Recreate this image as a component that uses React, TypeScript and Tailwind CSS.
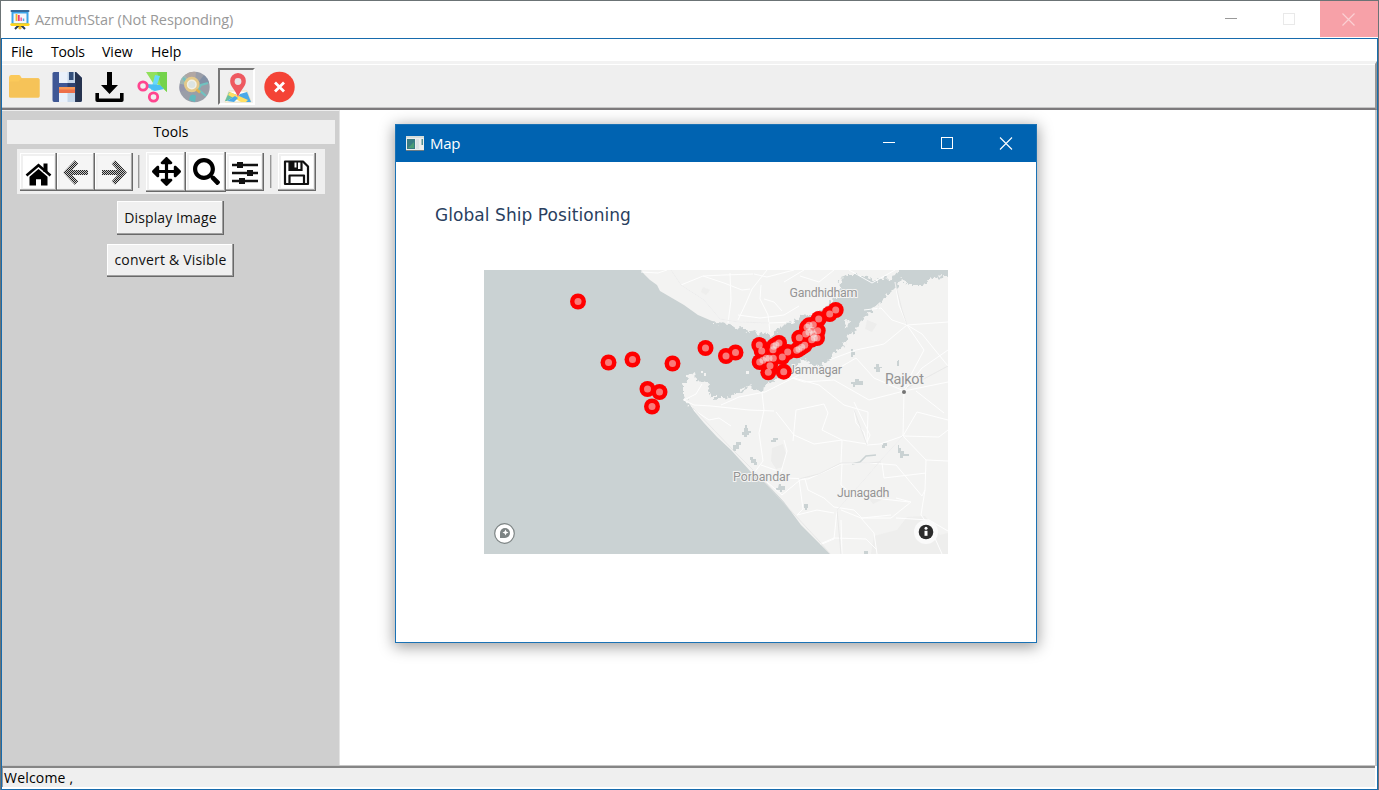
import React from "react";
import { FaArrowsAlt, FaSearch } from "react-icons/fa";

const ships: [number, number][] = [
  [94, 31.5], [124.5, 92.5], [148.5, 89.5], [188.5, 93.5], [163.5, 119], [175.5, 122], [168, 136.5],
  [221.5, 78], [242, 86], [251.5, 82.5], [275.3, 75], [277.7, 81], [275.7, 92], [279, 90.3],
  [282.3, 88.3], [285, 88.3], [289.3, 88.3], [286, 95.7], [284.3, 102.3], [299.7, 101.7],
  [298.3, 87], [303.7, 82], [289, 79.7], [289.7, 76.3], [292, 75], [295, 73], [312.7, 80.3],
  [315, 79], [317.7, 77.3], [320.7, 75.3], [315.3, 67.7], [323, 57.3], [325, 55.3], [329.3, 54.7],
  [334.7, 49], [345.7, 44], [351.7, 40], [321.7, 64], [325, 62.3], [327.7, 60.3], [333.7, 60.7],
  [329.3, 64], [327.7, 69.7], [330.3, 68], [333, 68],
];

const roads = [
  "M187 0L197 15L220 30L236 49L254 52L285 53L309 52",
  "M157 2L174 3L183 0M197 15L219 6L240 13L258 20L266 19",
  "M219 6L240 5L269 4M246 3L247 30L244 53M254 50L262 33L268 19L283 0M277 15L276 29L284 45L286 62",
  "M254 45L276 48L300 45L315 36M280 29L290 32L298 41M270 4L283 7L310 0",
  "M300 12L320 0M316 6L335 12L350 0M365 0L388 13L411 0M380 40L397 38L408 50L423 55L464 52",
  "M411 12L415 35L423 55L440 80L420 118M423 55L438 64L464 96M423 55L400 74L372 80L345 90",
  "M310 108L335 115L360 135L384 142M308 108L320 112L350 110L385 130L420 121L464 112",
  "M420 121L438 98L464 80M420 121L419 166L418 165M420 121L390 108L372 88L355 98",
  "M200 130L212 124L218 114M200 130L210 135L227 136L265 140L290 141M210 140L225 150L235 148L247 156",
  "M237 135L255 127L281 122L315 105M278 123L280 140L275 163L279 191L270 203M292 142L310 165L330 174L358 170L383 174",
  "M309 171L312 140L340 134L344 143L338 160L358 170L357 193",
  "M370 140L372 153L380 162L383 175L396 174L419 166L455 167L464 160",
  "M419 166L433 142L464 150M419 166L397 190L380 210L353 240L350 269L338 274",
  "M419 166L442 190L441 220L438 226L412 195L385 193L357 194L340 202L324 209L280 207",
  "M300 170L303 181L297 202L277 195M283 212L298 225L316 210L321 209L324 220L340 228L350 237L370 240L378 248L407 245",
  "M315 209L319 239L313 245L333 240L350 243M358 194L357 215L371 226L390 228L425 232",
  "M442 190L464 191M442 203L400 208L398 193M412 228L427 232L407 248L378 248",
  "M336 274L350 268L382 269L393 280M357 240L377 248L390 263L393 284M412 248L445 250L464 261",
  "M441 220L437 245L446 257L458 284M357 250L358 284M370 132L386 165L382 175M384 142L383 174M432 121L460 143",
];

function NavButton({ size, children }: { size: string; children: React.ReactNode }) {
  return (
    <div className={`${size} flex shrink-0 items-center justify-center bg-[#f0f0f0] shadow-[inset_-1px_-1px_#696969,inset_-2px_-2px_#a8a8a8,inset_1px_1px_#ffffff]`}>
      {children}
    </div>
  );
}

function TextButton({ size, children }: { size: string; children: React.ReactNode }) {
  return (
    <button className={`${size} flex items-center justify-center whitespace-nowrap bg-[#f0f0f0] pb-[2px] text-[14px] text-[#111] shadow-[inset_-1px_-1px_#696969,inset_-2px_-2px_#a0a0a0,inset_1px_1px_#ffffff]`}>
      {children}
    </button>
  );
}

function Dithered({ d }: { d: string }) {
  return (
    <svg width="32" height="32" viewBox="0 0 32 32">
      <defs>
        <pattern id="dither" width="2" height="2" patternUnits="userSpaceOnUse">
          <path d="M0 0h1v1H0zM1 1h1v1H1z" fill="#222" shapeRendering="crispEdges" />
        </pattern>
      </defs>
      <path d="M0 0h32v32H0z" fill="#f5f5f5" />
      <path d={d} fill="none" stroke="#c8c8c8" strokeWidth="4.800" />
      <path d={d} fill="none" stroke="url(#dither)" strokeWidth="4.800" />
    </svg>
  );
}

function AppIcon() {
  return (
    <svg width="20" height="20" viewBox="0 0 20 20" className="shrink-0">
      <path d="M10 14v5M9 15l-4 4M11 15l4 4" stroke="#2d3c50" strokeWidth="2" />
      <rect x="1.5" y="1" width="17" height="14" rx="1" fill="#3da5e8" />
      <rect x="0.5" y="0" width="19" height="2" rx="1" fill="#356a9b" />
      <rect x="0.3" y="13.2" width="19.4" height="2.800" rx="1.4" fill="#ffd51c" />
      <rect x="3.500" y="3.500" width="13" height="9.500" fill="#f4f7fb" />
      <path d="M6.5 4v7" stroke="#f7b42c" strokeWidth="1.8" />
      <path d="M8.8 5v6" stroke="#f13a6e" strokeWidth="1.8" />
      <path d="M11.2 7.5V11" stroke="#e6609f" strokeWidth="1.5" />
      <path d="M13.5 8.5V11" stroke="#57a8de" strokeWidth="1.5" />
      <circle cx="10" cy="17.800" r="1.7" fill="#f2bd19" />
    </svg>
  );
}

function FolderIcon() {
  return (
    <svg width="31" height="32" viewBox="0 0 31 32">
      <path d="M0 6.5Q0 4 2 4h8q1.2 0 2 2l.8 1.2H29q1.5 0 1.5 1.5V25q0 1.5-1.5 1.5H1.5Q0 26.500 0 25z" fill="#fbc95a" />
      <path d="M0 12q0-1.500 1.500-1.500h8l3-3.300H29q1.500 0 1.500 1.500V25q0 1.500-1.500 1.500H1.500Q0 26.500 0 25z" fill="#f6c358" />
    </svg>
  );
}

function FloppyIcon() {
  return (
    <svg width="31" height="32" viewBox="0 0 31 32">
      <path d="M2 1h22l6 6v22q0 2-2 2H2q-1.500 0-1.500-2V2.500Q.5 1 2 1z" fill="#3f5795" />
      <path d="M23 1h1l6 6v22q0 2-2 2h-5z" fill="#26334f" />
      <path d="M15.500 12h8v19h-8z" fill="#2f4370" />
      <path d="M7 1h9v11H7z" fill="#eaf1fb" />
      <path d="M15.500 1H23v11h-7.500z" fill="#c6d7ea" />
      <path d="M17 1h4.500v8H17z" fill="#34507c" />
      <path d="M7 16h16v5H7z" fill="#f99854" />
      <path d="M7 18.500h16V22H7z" fill="#ed704b" />
      <path d="M7 22h9v9H7z" fill="#eaf1fb" />
      <path d="M15.500 22H23v9h-7.500z" fill="#c6d7ea" />
    </svg>
  );
}

function DownloadIcon() {
  return (
    <svg width="29" height="32" viewBox="0 0 29 32">
      <path d="M12 1h5v13h6L14.500 23 6 14h6z" fill="#000" />
      <path d="M2.200 22v7.300h24.600V22" fill="none" stroke="#000" strokeWidth="3.600" strokeLinejoin="round" />
    </svg>
  );
}

function ScissorsIcon() {
  return (
    <svg width="31" height="32" viewBox="0 0 31 32">
      <path d="M9 1h21v20L22 14l-6-2z" fill="#91e05b" />
      <path d="M20 1h10v20l-6-6z" fill="#74d34c" />
      <path d="M18 4l5 1-5 15-4-1z" fill="#66d9fa" />
      <path d="M9 13l14 1 4 4-9 2-8-4z" fill="#49bff3" />
      <circle cx="6" cy="15" r="4.200" fill="none" stroke="#ff458f" strokeWidth="2.800" />
      <circle cx="16.500" cy="26" r="4.200" fill="none" stroke="#ff458f" strokeWidth="2.800" />
    </svg>
  );
}

function DiscIcon() {
  return (
    <svg width="31" height="32" viewBox="0 0 31 32">
      <circle cx="15.500" cy="16" r="15.200" fill="#9a9ea8" />
      <path d="M15.500 16L6 4Q11 0 17 1z" fill="#b1a7a3" />
      <path d="M15.500 16L25 4q4 3 5 8z" fill="#8290a5" />
      <path d="M15.500 16L1 13Q1 7 6 4z" fill="#a3b6b2" />
      <path d="M15.500 16L1 21Q0 17 1 13z" fill="#9697ac" />
      <path d="M4 7q4 3 2 7M29 12l-7 2-3 4 8 7" fill="none" stroke="#70c2c0" strokeWidth="2.300" />
      <path d="M11 25q3-3 6 0l-1 6-6-2z" fill="#60b9bd" />
      <circle cx="12.800" cy="13.500" r="6.400" fill="#f3f1e6" stroke="#e4c98a" strokeWidth="2.800" />
      <circle cx="12.800" cy="13.500" r="3.500" fill="#dbe4e2" />
      <path d="M17.500 18.500l3.500 3" stroke="#e2b252" strokeWidth="2.600" />
    </svg>
  );
}

function MapPinIcon() {
  return (
    <svg width="28" height="30" viewBox="0 0 28 30">
      <path d="M5 18h18l4 11H1z" fill="#fff" stroke="#ece2bd" />
      <path d="M5 19l8 3-10 6H1z" fill="#68bfa1" />
      <path d="M16 21l7-2 4 10h-9l-5-4z" fill="#4ba9e8" />
      <path d="M6 19L24 27l-2 2h-5L4 22z" fill="#ffe064" />
      <path d="M3 28l8-5 3 2-4 4z" fill="#4ba9e8" />
      <path d="M14 0a7.800 7.800 0 0 1 7.800 8.500c0 5-4.800 8-7.800 15.500-3-7.500-7.800-10.500-7.800-15.500a7.800 7.800 0 0 1 7.800-8.500z" fill="#ee5960" />
      <circle cx="14" cy="8.500" r="3.400" fill="#e8e3e6" />
    </svg>
  );
}

function ShipMap() {
  return (
    <svg width="464" height="284" viewBox="0 0 464 284" className="block">
      <defs>
        <filter id="rough" x="-5%" y="-5%" width="110%" height="110%" colorInterpolationFilters="sRGB">
          <feTurbulence type="fractalNoise" baseFrequency="0.25" numOctaves="2" seed="4" />
          <feDisplacementMap in="SourceGraphic" scale="9" xChannelSelector="R" yChannelSelector="G" />
        </filter>
      </defs>
      <rect width="464" height="284" fill="#cad2d3" />
      <g fill="#f3f3f2">
        <path d="M157 0L160 4 166 10 173 15 176 21 200 35 214 45 228 51 244 53 300 48V0z" />
        <path d="M204 131L210 141 220 153 233 167 247 180 267 202 283 214 300 232 317 255 346 284H464V118L272 128z" />
        <g filter="url(#rough)">
          <path d="M235 45L230 53 246 54 252 58 258 57 266 62 273 61 278 66 282 61 287 68 292 60 297 58 302 53 310 51 318 46 326 47 335 41 342 37 350 30 354 25 356 13 361 5 378 5 393 10 402 8 408 9 413 2V-10H235z" />
          <path d="M475 6L448 8 440 15 425 15 417 9 413 16 405 24 397 32 388 40 379 48 372 60 364 66 359 77 352 80 344 91 334 97 326 93 319 89 312 97 305 105 292 110 282 115 278 122 272 121 267 116 260 119 252 124 242 128 229 128 225 123 226 114 220 112 212 111 211 101 204 107 199 115 199 125 204 136 245 160H475z" />
          <path d="M361 50l4 2-2 5-3-1zM217 112l5 2-3 3z" />
        </g>
        <path d="M316 94h12v2h-12zM217 101h2v2h-2zM220 103h2v3h-2zM206 104h2v2h-2zM262 101h3v3h-3z" />
      </g>
      <g fill="#ececeb" opacity="0.8">
        <path d="M288 178l11-4 3 10-3 13-7 2-5-8zM382 225l14-4 6 7-13 6zM390 266l23-6 10-13 18-1 15 19 8-2v21h-77z" />
        <path d="M383 50l10 4-5 8-7-3zM219 17l7 3-4 5-5-3z" />
      </g>
      <g fill="#cad2d3">
        <path d="M261 155h2v3h1v3h3v2h-2v2h-2v2h-3v-2h-2v-3h2v-4h1zM252 172h5v3h-2v4h-3v2h-3v-6h3zM266 187h3v2h3v3h1v3h-3v-2h-3v-3h-1zM289 168h5v2h-2v2h-5v-2h2zM295 214h2v2h4v4h-3v2h-2v-2h-4v-2h2zM320 234h4v4h-1v2h-2v-2h-1zM399 173h4v3h-2v2h-3v-3h1z" />
        <path d="M414 175h1v3h2v3h3v3h5v2h-6v2h-3v-5h-2z" />
        <path d="M371 109h4v2h4v4h-8v2h-2v-3h-2v-2h4zM392 94h3v3h3v1h-2v4h-4v-3h-2v-2h2zM367 79h2v3h2v3h-2v2h-2zM414 90h1v6h-2v-5h1zM380 281h4v3h-4z" />
      </g>
      <path d="M368 194l8-2 6-6 10-1" fill="none" stroke="#cad2d3" strokeWidth="1.500" />
      <g fill="none" stroke="#fff" strokeWidth="1" strokeLinejoin="round" opacity="0.9">
        {roads.map((d, i) => <path key={i} d={d} />)}
      </g>
      <g fill="none" stroke="#e0e1e0" strokeWidth="0.600">
        <path d="M187 0L197 15L220 30L236 49L254 52L285 53M209 138L249 180L270 201L336 272L346 284M419 166L397 190L380 210L353 240L357 284" />
        <path d="M315 209L335 204L357 193L383 193L397 192M411 12L418 40L423 55M370 140L383 175M423 118L464 96" />
      </g>
      <g fontFamily="Roboto, sans-serif" fill="#949494" stroke="#f3f3f2" strokeWidth="2.200" paintOrder="stroke" fontSize="12.500">
        <text x="305.500" y="26.500" textLength="68" lengthAdjust="spacing">Gandhidham</text>
        <text x="304" y="103.800" textLength="54" lengthAdjust="spacing">Jamnagar</text>
        <text x="401" y="114" fontSize="14.500" textLength="39" lengthAdjust="spacing">Rajkot</text>
        <text x="249" y="211.200" textLength="57" lengthAdjust="spacing">Porbandar</text>
        <text x="353" y="227.200" textLength="52.500" lengthAdjust="spacing">Junagadh</text>
      </g>
      <circle cx="420" cy="122" r="2" fill="#747474" />
      <g fill="#ff0000">
        {ships.map(([x, y], i) => <circle key={i} cx={x} cy={y} r="8" />)}
      </g>
      <g fill="#f3f3f2" fillOpacity="0.5">
        {ships.map(([x, y], i) => <circle key={i} cx={x} cy={y} r="3.500" />)}
      </g>
      <circle cx="20.500" cy="263.500" r="9.800" fill="#fff" stroke="#7d8484" strokeWidth="1.200" />
      <path d="M16 268v-5a5 5 0 1 1 5 5z" fill="#7d8484" />
      <path d="M21.500 259.500l.9 2.100 2.100.9-2.100.9-.9 2.100-.9-2.100-2.100-.9 2.100-.9z" fill="#fff" />
      <circle cx="442" cy="262" r="12" fill="#fafafa" />
      <circle cx="442" cy="262" r="7.300" fill="#2b2b2b" />
      <path d="M440.500 260.800h3v5h-3z" fill="#fff" />
      <circle cx="442" cy="258.200" r="1.500" fill="#fff" />
    </svg>
  );
}

function MapWindow() {
  return (
    <section className="absolute left-[395px] top-[124px] flex h-[519px] w-[642px] flex-col border border-[#1a72b5] bg-white shadow-[0_3px_14px_1px_rgba(0,0,0,0.38)]">
      <header className="flex h-[37px] shrink-0 items-center bg-[#0063b1] pl-[10px] text-white">
        <svg width="18" height="15" viewBox="0 0 18 15">
          <rect width="18" height="15" fill="#eceeed" />
          <path d="M0 0h18v2H0z" fill="#d5ddda" />
          <path d="M1 3h8v10H1z" fill="#397c83" />
          <path d="M2 12l6-6v6z" fill="#4b9c75" />
          <path d="M10 3h3v10h-3z" fill="#dce1e4" />
          <path d="M15.500 3h1.500v6h-1.500z" fill="#528f91" />
          <path d="M0 14h18v1H0z" fill="#6b7b83" />
        </svg>
        <span className="ml-[6px] text-[15px] tracking-[-0.300px]">Map</span>
        <svg width="130" height="14" viewBox="0 0 130 14" className="ml-auto mr-[23px]" fill="none" stroke="#fff">
          <path d="M0 5.500h12M58.500 .5h11v11h-11z" shapeRendering="crispEdges" />
          <path d="M117 .5l12 12M129 .5l-12 12" strokeWidth="1.100" />
        </svg>
      </header>
      <h2 className="ml-[39px] mt-[41px] h-[24px] whitespace-nowrap font-['DejaVu_Sans',sans-serif] text-[17px] leading-[24px] tracking-[0.060px] text-[#2a3f5f]">Global Ship Positioning</h2>
      <div className="ml-[88px] mt-[43px] h-[284px] w-[464px]"><ShipMap /></div>
    </section>
  );
}

export default function App() {
  return (
    <main className="relative flex h-[790px] w-[1379px] cursor-default flex-col overflow-hidden border-l border-r border-t border-[#6b7375] bg-white font-['Open_Sans','Noto_Sans',sans-serif] text-black">
      <header className="flex h-[37px] shrink-0 items-center pl-[9px]">
        <AppIcon />
        <h1 className="ml-[5px] text-[14.500px] leading-5 tracking-[-0.070px] text-[#999]">AzmuthStar (Not Responding)</h1>
        <svg width="71" height="14" viewBox="0 0 71 14" className="ml-auto" fill="none" shapeRendering="crispEdges">
          <path d="M0 5.500h12" stroke="#999" />
          <path d="M58.500 .5h11v11h-11z" stroke="#e9e9e9" />
        </svg>
        <div className="ml-[24px] flex h-[36px] w-[58px] items-center justify-center self-start bg-[#f7a1a8] pr-[2px]">
          <svg width="13" height="13" viewBox="0 0 13 13"><path d="M.5.5l12 12M12.500.5l-12 12" stroke="#fbd0d3" strokeWidth="1.200" /></svg>
        </div>
      </header>
      <div className="flex min-h-0 flex-1 flex-col border border-[#176bad]">
        <nav className="flex h-[22px] shrink-0 items-center pl-[9px] pt-[3px] text-[14px] leading-5">
          <span className="w-[40px]">File</span>
          <span className="w-[51px] tracking-[-0.200px]">Tools</span>
          <span className="w-[49px]">View</span>
          <span>Help</span>
        </nav>
        <div className="flex h-[49px] shrink-0 items-center border-b-2 border-r-2 border-t-[3px] border-b-[#7d7a7c] border-r-[#969696] border-t-[#f2f2f2] bg-[#efefef] pl-[7px] pt-px shadow-[inset_0_1px_#fff,inset_0_-1px_#c5c5c5]">
          <div className="flex w-[43px]"><FolderIcon /></div>
          <div className="flex w-[43px]"><FloppyIcon /></div>
          <div className="flex w-[42px]"><DownloadIcon /></div>
          <div className="flex w-[42px]"><ScissorsIcon /></div>
          <div className="flex w-[39px]"><DiscIcon /></div>
          <div className="flex h-[37px] w-[37px] items-end justify-end border-2 border-b-white border-l-[#777] border-r-white border-t-[#777] bg-[#f0f0f0] pr-px"><MapPinIcon /></div>
          <svg width="32" height="32" viewBox="0 0 32 32" className="ml-[8px]">
            <circle cx="16.500" cy="16" r="15.200" fill="#f44336" />
            <path d="M12 11.500l9 9M21 11.500l-9 9" stroke="#fff" strokeWidth="2.800" />
          </svg>
        </div>
        <div className="flex min-h-0 flex-1">
          <aside className="flex w-[338px] shrink-0 flex-col items-center border-r border-t border-r-[#e4e4e4] border-t-[#eee] bg-[#cfcfcf] pl-[1px]">
            <div className="mt-[9px] flex h-[24px] w-[328px] shrink-0 items-center justify-center bg-[#efefef] pb-px text-[14px]">Tools</div>
            <div className="mt-[5px] flex h-[45px] w-[308px] shrink-0 items-center bg-[#efefef] pl-[3px]">
              <NavButton size="h-[38px] w-[37px]">
                <svg width="31" height="32" viewBox="0 0 31 32">
                  <path d="M0 0h31v32H0z" fill="#fff" />
                  <path d="M3.500 19.500l12-10.300 12 10.300" fill="none" stroke="#000" strokeWidth="2.600" />
                  <path d="M6.500 20.800l9-7.700 9 7.700v8.700h-6.500v-6.300h-5v6.300H6.500zM20.500 7.500h4V16h-4z" fill="#000" />
                </svg>
              </NavButton>
              <NavButton size="h-[38px] w-[38px]"><Dithered d="M16.500 6L6.500 16.500 16.500 27M7 16.500h21" /></NavButton>
              <NavButton size="h-[38px] w-[38px]"><Dithered d="M15.500 6l10 10.500-10 10.500M25 16.500H4" /></NavButton>
              <div className="ml-[5px] mr-[6px] h-[33px] w-[2px] border-l border-[#999] bg-[#ccc]" />
              <NavButton size="h-[40px] w-[40px]"><div className="flex h-[34px] w-[34px] items-center justify-center bg-white"><FaArrowsAlt size={29} /></div></NavButton>
              <NavButton size="h-[40px] w-[40px]"><div className="flex h-[34px] w-[34px] items-center justify-center bg-white"><FaSearch size={27} /></div></NavButton>
              <NavButton size="h-[38px] w-[38px]">
                <svg width="32" height="32" viewBox="0 0 32 32">
                  <path d="M0 0h32v32H0z" fill="#fff" />
                  <path d="M3 9h26M3 17h26M3 25h26" stroke="#111" strokeWidth="2.400" />
                  <path d="M8 6h6v6H8zM18 14h6v6h-6zM10 22h6v6h-6z" fill="#111" />
                </svg>
              </NavButton>
              <div className="ml-[6px] mr-[6px] h-[33px] w-[2px] border-l border-[#999] bg-[#ccc]" />
              <NavButton size="h-[38px] w-[38px]">
                <svg width="32" height="32" viewBox="0 0 32 32" fill="none" stroke="#111" strokeWidth="2.200">
                  <path d="M0 0h32v32H0z" fill="#fff" stroke="none" />
                  <path d="M4 5.500H22l5 5v17.500h-23zM8.500 28V19.500h14.500V28" strokeLinejoin="round" />
                  <path d="M8.500 5v9h12V5" /><path d="M9 5h8v9h-8z" fill="#111" stroke="none" />
                  <path d="M14.500 6.500v5" stroke="#fff" strokeWidth="2" />
                </svg>
              </NavButton>
            </div>
            <div className="mt-[7px] flex flex-col items-center gap-[9px] pr-[1px]">
              <TextButton size="h-[34px] w-[107px]"><span className="tracking-[0.100px]">Display Image</span></TextButton>
              <TextButton size="h-[33px] w-[127px]"><span className="tracking-[0.200px]">convert &amp; Visible</span></TextButton>
            </div>
          </aside>
          <div className="flex-1 border-r-2 border-[#c6c6c6] bg-white" />
        </div>
        <footer className="flex h-[23px] shrink-0 border-b-2 border-r-2 border-white bg-white">
          <div className="flex-1 border-l border-t-2 border-l-[#999] border-t-[#858585] bg-[#efefef] pl-px text-[14px] leading-[20px] tracking-[0.200px] shadow-[0_-1px_#c5c5c5]">Welcome ,</div>
        </footer>
      </div>
      <div className="pointer-events-none absolute left-[-1px] top-[-1px] h-[790px] w-[1379px]"><MapWindow /></div>
    </main>
  );
}
